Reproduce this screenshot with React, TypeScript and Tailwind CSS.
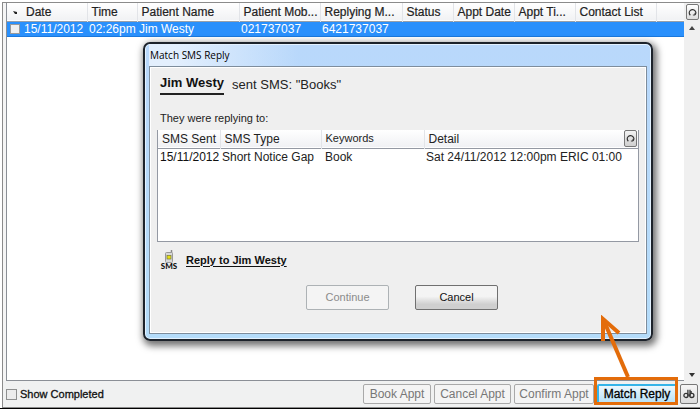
import { useState } from "react";

const columns = [
  { label: "Date", value: "15/11/2012", width: "w-[65px]" },
  { label: "Time", value: "02:26pm", width: "w-[50px]" },
  { label: "Patient Name", value: "Jim Westy", width: "w-[102px]" },
  { label: "Patient Mob...", value: "021737037", width: "w-[81px]" },
  { label: "Replying M...", value: "6421737037", width: "w-[82px]" },
  { label: "Status", value: "", width: "w-[51px]" },
  { label: "Appt Date", value: "", width: "w-[61px]" },
  { label: "Appt Ti...", value: "", width: "w-[61px]" },
  { label: "Contact List", value: "", width: "w-[81px]" },
];

function RefreshIcon() {
  return (
    <svg viewBox="0 0 10 10" className="size-[9px]" fill="none" stroke="#333" strokeWidth="1.3">
      <path d="M2.6 8C1 6.6 1 4.2 2.4 2.9 4 1.4 6.6 1.6 7.9 3.2c1.1 1.4 1 3.2-.3 4.4" />
      <path d="M5.4 7.8h2.4V5.4" strokeWidth="1" />
    </svg>
  );
}

function SmsIcon() {
  return (
    <svg viewBox="0 0 18 20" className="h-5 w-[18px]" aria-label="SMS">
      <path d="M11.5 0v4" stroke="#888" strokeWidth="1.5" />
      <rect x="5.5" y="2.5" width="7" height="10" rx="1" fill="#d8d8d8" stroke="#999" />
      <rect x="7" y="5.5" width="4" height="3.5" fill="#e6e010" stroke="#77773a" strokeWidth="0.7" />
      <text x="9" y="19" textAnchor="middle" fontSize="8" fontWeight="900" fill="#111" fontFamily="Lato, sans-serif">
        SMS
      </text>
    </svg>
  );
}

function ReplyTable() {
  const [selected, setSelected] = useState(false);

  return (
    <table className="w-full table-fixed border-collapse text-left text-xs leading-4 whitespace-nowrap">
      <thead>
        <tr className="h-[18px] border-b border-[#9aa0a8] bg-linear-to-b from-white to-[#f1f2f4]">
          <th className="w-[15px] p-0 text-center font-normal">
            <svg viewBox="0 0 4 4" className="mx-auto size-1">
              <path d="M0 1l4 1v2H2z" fill="#222" />
            </svg>
          </th>
          {columns.map((col) => (
            <th
              key={col.label}
              className={`${col.width} border-r border-[#e2e4e8] p-0 pl-1 font-normal text-[#222] [-webkit-text-stroke:0.2px_#222]`}
            >
              {col.label}
            </th>
          ))}
          <th className="p-0" />
        </tr>
      </thead>
      <tbody>
        <tr className="h-[15px] border-b border-[#1b78dc] bg-[#2a90fc] text-white">
          <td className="p-0">
            <input
              type="checkbox"
              aria-label="Select reply"
              checked={selected}
              onChange={(e) => setSelected(e.target.checked)}
              className="mx-auto block size-[10px] appearance-none border border-[#9a9a9a] bg-[#f0f0f0] checked:bg-[#555]"
            />
          </td>
          {columns.map((col) => (
            <td key={col.label} className="p-0 pl-0.5 leading-[14px]">
              {col.value}
            </td>
          ))}
          <td className="p-0" />
        </tr>
      </tbody>
    </table>
  );
}

function MatchDialog() {
  return (
    <div
      role="dialog"
      aria-label="Match SMS Reply"
      className="absolute top-[42px] right-[47px] left-[143px] rounded-[7px] border-2 border-[#1d232b] bg-linear-to-b from-[#b9d8fb] to-[#b4dcfa] px-1 pb-[5px] shadow-[2px_3px_7px_2px_rgba(0,0,0,0.55)] ring-1 ring-[#e4f2ff] ring-inset"
    >
      <div className="flex h-[22px] items-center bg-linear-to-r from-[#e3effd] from-5% to-transparent to-30% px-px font-['Open_Sans',sans-serif] text-[10px] text-black">
        Match SMS Reply
      </div>
      <div className="border border-[#7e8d9c] bg-[#efefef] px-[7px] pb-[23px] text-[11px] text-[#222] ring-1 ring-white ring-inset">
        <h2 className="flex gap-2 px-[3px] pt-2 text-[13px] leading-5 font-normal">
          <span className="border-b-2 border-[#222] leading-4 font-bold text-[#111]">Jim Westy</span>
          <span>sent SMS: "Books"</span>
        </h2>
        <p className="px-[3px] pt-[15px] pb-1 leading-4">They were replying to:</p>

        <div className="flex h-[112px] flex-col border border-t-0 border-[#9499a3] bg-white">
          <table className="w-full table-fixed border-collapse text-left text-xs whitespace-nowrap text-[#222]">
            <thead>
              <tr className="h-[18px] border-b border-[#9499a3] bg-linear-to-b from-white to-[#f0f1f4]">
                <th className="w-[62px] border-r border-[#e2e4e8] p-0 pl-1 font-normal">SMS Sent</th>
                <th className="w-[101px] border-r border-[#e2e4e8] p-0 pl-1 font-normal">SMS Type</th>
                <th className="w-[103px] border-r border-[#e2e4e8] p-0 pl-1 text-[11px] font-normal">Keywords</th>
                <th className="p-0 pl-1 font-normal">Detail</th>
                <th className="w-[14px] p-0">
                  <button
                    aria-label="Refresh list"
                    className="flex h-[17px] w-[13px] items-center justify-center rounded-xs border border-[#777] bg-linear-to-b from-[#f4f4f4] to-[#cfcfcf]"
                  >
                    <RefreshIcon />
                  </button>
                </th>
              </tr>
            </thead>
            <tbody>
              <tr className="h-[18px]">
                <td className="p-0 pl-0.5 text-[#111]">15/11/2012</td>
                <td className="p-0 pl-0.5">Short Notice Gap</td>
                <td className="p-0 pl-1">Book</td>
                <td className="p-0 pl-0.5" colSpan={2}>
                  Sat 24/11/2012 12:00pm ERIC 01:00
                </td>
              </tr>
            </tbody>
          </table>
        </div>

        <div className="flex items-center gap-2 px-[3px] pt-2">
          <SmsIcon />
          <a href="#reply" className="text-[11px] font-bold text-[#111] underline underline-offset-2">
            Reply to Jim Westy
          </a>
        </div>

        <div className="flex justify-center gap-[26px] pt-[15px] pl-2 text-[11px]">
          <button disabled className="h-[25px] w-[83px] rounded-xs border border-[#adb2b5] bg-[#f4f4f4] text-[#8b8b8b]">
            Continue
          </button>
          <button className="h-[25px] w-[83px] rounded-xs border border-[#707070] bg-linear-to-b from-[#f4f4f4] from-45% to-[#cfcfcf] to-80% text-[#111]">
            Cancel
          </button>
        </div>
      </div>
    </div>
  );
}

export default function App() {
  const [showCompleted, setShowCompleted] = useState(false);

  return (
    <div className="relative flex min-h-screen flex-col border-b border-black bg-white pt-[2px] pl-[2px] font-['Liberation_Sans',Arial,sans-serif]">
      <div className="flex flex-1 flex-col border border-r-0 border-[#8b8b8b] bg-[#f5f5f5]">
        <div className="flex flex-1 pl-[3px]">
          <main className="min-w-0 flex-1 border-b border-l border-[#8b8f96] bg-white">
            <ReplyTable />
          </main>
          <div className="flex w-4 flex-col items-center justify-between bg-[#f0f0f0] pb-1">
            <div className="flex flex-col items-center gap-1.5 pt-px">
              <button
                aria-label="Refresh replies"
                className="flex h-4 w-[13px] items-center justify-center rounded-xs border border-[#777] bg-linear-to-b from-white to-[#dcdcdc]"
              >
                <RefreshIcon />
              </button>
              <svg viewBox="0 0 6 4" className="h-1 w-1.5">
                <path d="M0 4l3-4 3 4z" fill="#444" />
              </svg>
            </div>
            <svg viewBox="0 0 6 4" className="h-1 w-1.5">
              <path d="M0 0h6L3 4z" fill="#333" />
            </svg>
          </div>
        </div>

        <footer className="flex h-[26px] items-center justify-between bg-[#f0f1f1] pr-0.5 pl-[3px] text-xs">
          <label className="flex items-center gap-[3px] text-[11px] text-[#111] [-webkit-text-stroke:0.3px_#111]">
            <input
              type="checkbox"
              checked={showCompleted}
              onChange={(e) => setShowCompleted(e.target.checked)}
              className="size-[11px] appearance-none border border-[#8e8f8f] bg-[#ececec] checked:bg-[#555]"
            />
            Show Completed
          </label>
          <div className="flex items-center gap-[3px]">
            <button disabled className="h-5 w-[68px] rounded-xs border border-[#a9a9a9] bg-[#f4f4f4] text-[#777]">
              Book Appt
            </button>
            <button disabled className="h-5 w-[77px] rounded-xs border border-[#a9a9a9] bg-[#f4f4f4] text-[#777]">
              Cancel Appt
            </button>
            <button disabled className="h-5 w-[80px] rounded-xs border border-[#a9a9a9] bg-[#f4f4f4] text-[#777]">
              Confirm Appt
            </button>
            <button className="h-5 w-[80px] rounded-xs border-2 border-[#35b4e8] bg-linear-to-b from-[#eef8fd] to-[#b9e2f7] text-black [-webkit-text-stroke:0.3px_#000]">
              Match Reply
            </button>
            <button
              aria-label="Find"
              className="flex h-5 w-[18px] items-center justify-center rounded-xs border border-[#777] bg-linear-to-b from-[#f6f6f6] to-[#dcdcdc]"
            >
              <svg viewBox="0 0 12 10" className="h-[10px] w-3" fill="none" stroke="#333" strokeWidth="1.3">
                <circle cx="3" cy="6.4" r="2.1" />
                <circle cx="8.8" cy="6.4" r="2.1" />
                <path d="M4.9 7V.8M7 7V.8M7 3h2" />
              </svg>
            </button>
          </div>
        </footer>
      </div>

      <MatchDialog />

      {/* callout pointing from the Match Reply button to the dialog */}
      <div className="pointer-events-none absolute right-[22px] bottom-[3px] h-7 w-[84px] border-[3px] border-[#e36c0a]" />
      <svg
        viewBox="0 0 32 64"
        className="pointer-events-none absolute right-[68px] bottom-[29px] h-16 w-8"
        fill="none"
        stroke="#e36c0a"
        strokeWidth="4"
      >
        <path d="M28 62L4 6" />
        <path d="M3 26L3 4L19 18" />
      </svg>
    </div>
  );
}
